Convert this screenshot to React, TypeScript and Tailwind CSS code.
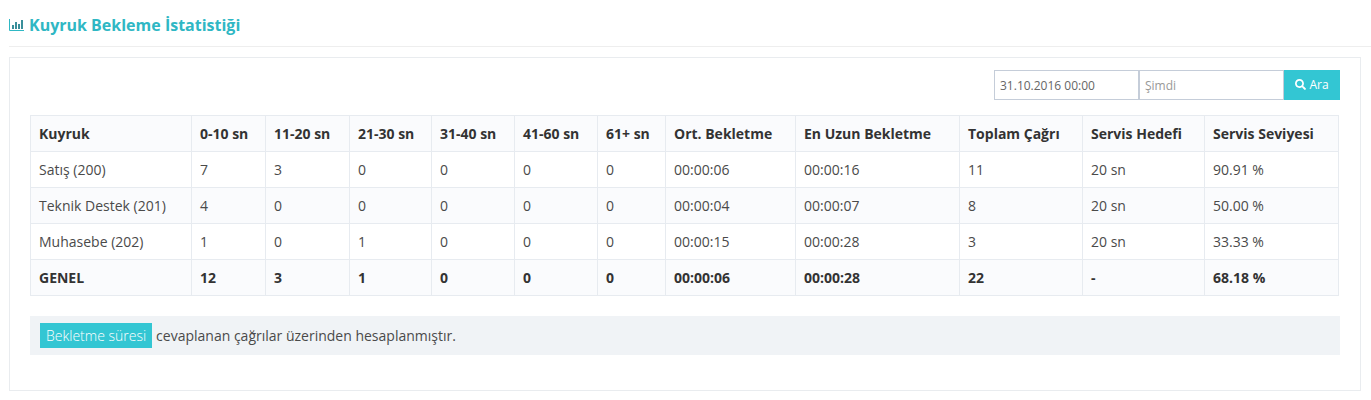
import React from 'react';
import { FaSearch } from 'react-icons/fa';

const headers = ['Kuyruk', '0-10 sn', '11-20 sn', '21-30 sn', '31-40 sn', '41-60 sn', '61+ sn', 'Ort. Bekletme', 'En Uzun Bekletme', 'Toplam Çağrı', 'Servis Hedefi', 'Servis Seviyesi'];
const widths = ['w-[161px]', 'w-[74px]', 'w-[84px]', 'w-[82px]', 'w-[83px]', 'w-[83px]', 'w-[68px]', 'w-[130px]', 'w-[164px]', 'w-[123px]', 'w-[122px]', 'w-[134px]'];

const rows = [
  ['Satış (200)', '7', '3', '0', '0', '0', '0', '00:00:06', '00:00:16', '11', '20 sn', '90.91 %'],
  ['Teknik Destek (201)', '4', '0', '0', '0', '0', '0', '00:00:04', '00:00:07', '8', '20 sn', '50.00 %'],
  ['Muhasebe (202)', '1', '0', '1', '0', '0', '0', '00:00:15', '00:00:28', '3', '20 sn', '33.33 %'],
];
const total = ['GENEL', '12', '3', '1', '0', '0', '0', '00:00:06', '00:00:28', '22', '-', '68.18 %'];

const ChartIcon = () => (
  <svg width="15" height="12" viewBox="0 0 15 12" fill="none" className="mr-[5px]">
    <path d="M0.5 0V11.5H15" stroke="#2fb8c4" strokeWidth="1" />
    <path d="M3 6h2v4H3zM6 3h2v7H6zM9 5h2v5H9zM12 1h2v9h-2z" fill="#3a8f9a" />
  </svg>
);

const App: React.FC = () => {
  return (
    <div className="w-[1371px] h-[400px] overflow-hidden bg-white font-['Open_Sans',sans-serif] text-[14px] text-[#4a4a4a]">
      <div className="ml-[9px] h-[47px] pt-[14px] border-b border-[#eeeeee] flex items-start">
        <div className="flex items-center h-[22px]">
          <ChartIcon />
          <h1 className="text-[16px] font-bold leading-[22px] text-[#2fb7c4]">Kuyruk Bekleme İstatistiği</h1>
        </div>
      </div>

      <div className="ml-[9px] mr-[10px] mt-[10px] h-[334px] border border-[#e9ecef] px-[20px] pt-[12px]">
        <div className="flex justify-end h-[30px]">
          <input
            readOnly
            value="31.10.2016 00:00"
            className="w-[145px] h-[30px] border border-[#c5cdd9] px-[5px] text-[12px] text-[#666666] outline-none"
          />
          <input
            readOnly
            placeholder="Şimdi"
            className="w-[145px] h-[30px] border border-[#c5cdd9] px-[5px] text-[12px] outline-none placeholder:text-[#999999]"
          />
          <button className="w-[56px] h-[30px] pb-[1px] bg-[#33c6d3] text-white text-[12px] flex items-center justify-center gap-[3px]">
            <FaSearch className="text-[11px]" />
            <span>Ara</span>
          </button>
        </div>

        <table className="mt-[15px] w-[1308px] table-fixed border-collapse">
          <colgroup>
            {widths.map((w, i) => (
              <col key={i} className={w} />
            ))}
          </colgroup>
          <thead>
            <tr className="h-[36px] bg-[#fafbfd]">
              {headers.map((h) => (
                <th key={h} className="border border-[#e7ebf0] px-[8px] text-left font-bold text-[#333333]">
                  {h}
                </th>
              ))}
            </tr>
          </thead>
          <tbody>
            {rows.map((row, r) => (
              <tr key={r} className={r === 1 ? 'h-[36px] bg-[#fafbfd]' : 'h-[36px]'}>
                {row.map((c, i) => (
                  <td key={i} className="border border-[#e7ebf0] px-[8px]">
                    {c}
                  </td>
                ))}
              </tr>
            ))}
            <tr className="h-[36px] bg-[#fafbfd]">
              {total.map((c, i) => (
                <td key={i} className="border border-[#e7ebf0] px-[8px] font-bold text-[#333333]">
                  {c}
                </td>
              ))}
            </tr>
          </tbody>
        </table>

        <div className="mt-[20px] h-[39px] bg-[#f0f3f6] flex items-center px-[10px]">
          <span className="h-[25px] leading-[25px] px-[6px] bg-[#33c6d3] font-light text-white">Bekletme süresi</span>
          <span className="ml-[4px]">cevaplanan çağrılar üzerinden hesaplanmıştır.</span>
        </div>
      </div>
    </div>
  );
};

export default App;
